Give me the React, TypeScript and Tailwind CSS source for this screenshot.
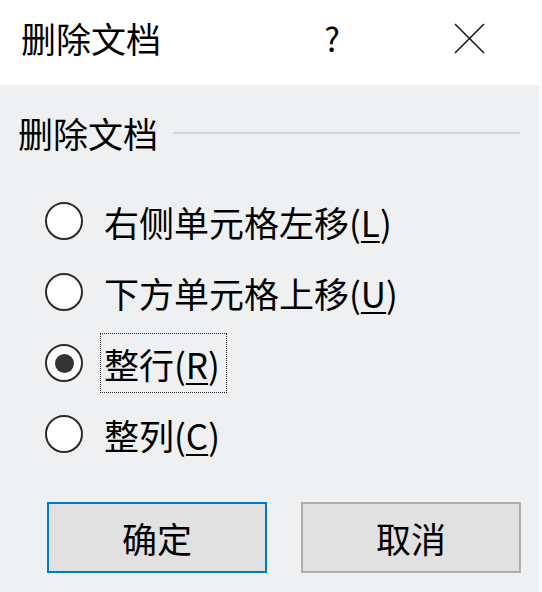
import { useState } from "react";

const options = [
  { label: "右侧单元格左移", key: "L" },
  { label: "下方单元格上移", key: "U" },
  { label: "整行", key: "R" },
  { label: "整列", key: "C" },
];

const font = { fontFamily: '"Noto Sans CJK SC", "Noto Sans", sans-serif' };

const Radio = ({ checked }: { checked: boolean }) => (
  <div className="w-[38px] h-[38px] rounded-full border-2 border-[#2b2b2b] bg-white flex items-center justify-center shrink-0">
    {checked && <div className="w-[19px] h-[19px] rounded-full bg-[#333333]"></div>}
  </div>
);

const App = () => {
  const [selected, setSelected] = useState(2);

  return (
    <div
      className="w-[542px] h-[592px] bg-[#eff0f2] border-r-[3px] border-[#f8f9fa] text-black flex flex-col"
      style={font}
    >
      {/* title bar */}
      <div className="h-[85px] bg-white flex items-start pt-[20px] pl-[21px] pr-[54px] shrink-0">
        <span className="text-[35px] leading-none flex-1">删除文档</span>
        <span className="text-[33px] leading-none mt-[2px]">?</span>
        <svg className="ml-[114px] mt-[3px]" width="31" height="31" viewBox="0 0 31 31">
          <path d="M1 1 L30 30 M30 1 L1 30" stroke="#1a1a1a" strokeWidth="1.6" fill="none" />
        </svg>
      </div>

      {/* group */}
      <div className="flex items-center pt-[30px] pl-[18px] pr-[19px]">
        <span className="text-[35px] leading-none whitespace-nowrap">删除文档</span>
        <div className="flex-1 h-[2px] bg-[#d6d7d9] ml-[15px] mt-[1px]"></div>
      </div>

      <div className="flex flex-col gap-[11px] mt-[41px] pl-[45px]">
        {options.map((o, i) => (
          <div
            key={o.key}
            className="h-[60px] flex items-center cursor-default"
            onClick={() => setSelected(i)}
          >
            <Radio checked={selected === i} />
            <div
              className={
                "ml-[17px] h-[60px] flex items-center pl-[3px] pr-[6px] border border-dotted " +
                (selected === i ? "border-[#222222]" : "border-transparent")
              }
            >
              <span className="text-[35px] leading-none">
                {o.label}(<span className="underline underline-offset-[4px] decoration-[1.5px]">{o.key}</span>)
              </span>
            </div>
          </div>
        ))}
      </div>

      {/* buttons */}
      <div className="flex gap-[34px] pl-[47px] mt-[38px]">
        <button className="w-[220px] h-[71px] bg-[#e1e1e1] border-2 border-[#0078d7] text-[35px] leading-none">
          确定
        </button>
        <button className="w-[220px] h-[71px] bg-[#e1e1e1] border-2 border-[#adadad] text-[35px] leading-none">
          取消
        </button>
      </div>
    </div>
  );
};

export default App;
